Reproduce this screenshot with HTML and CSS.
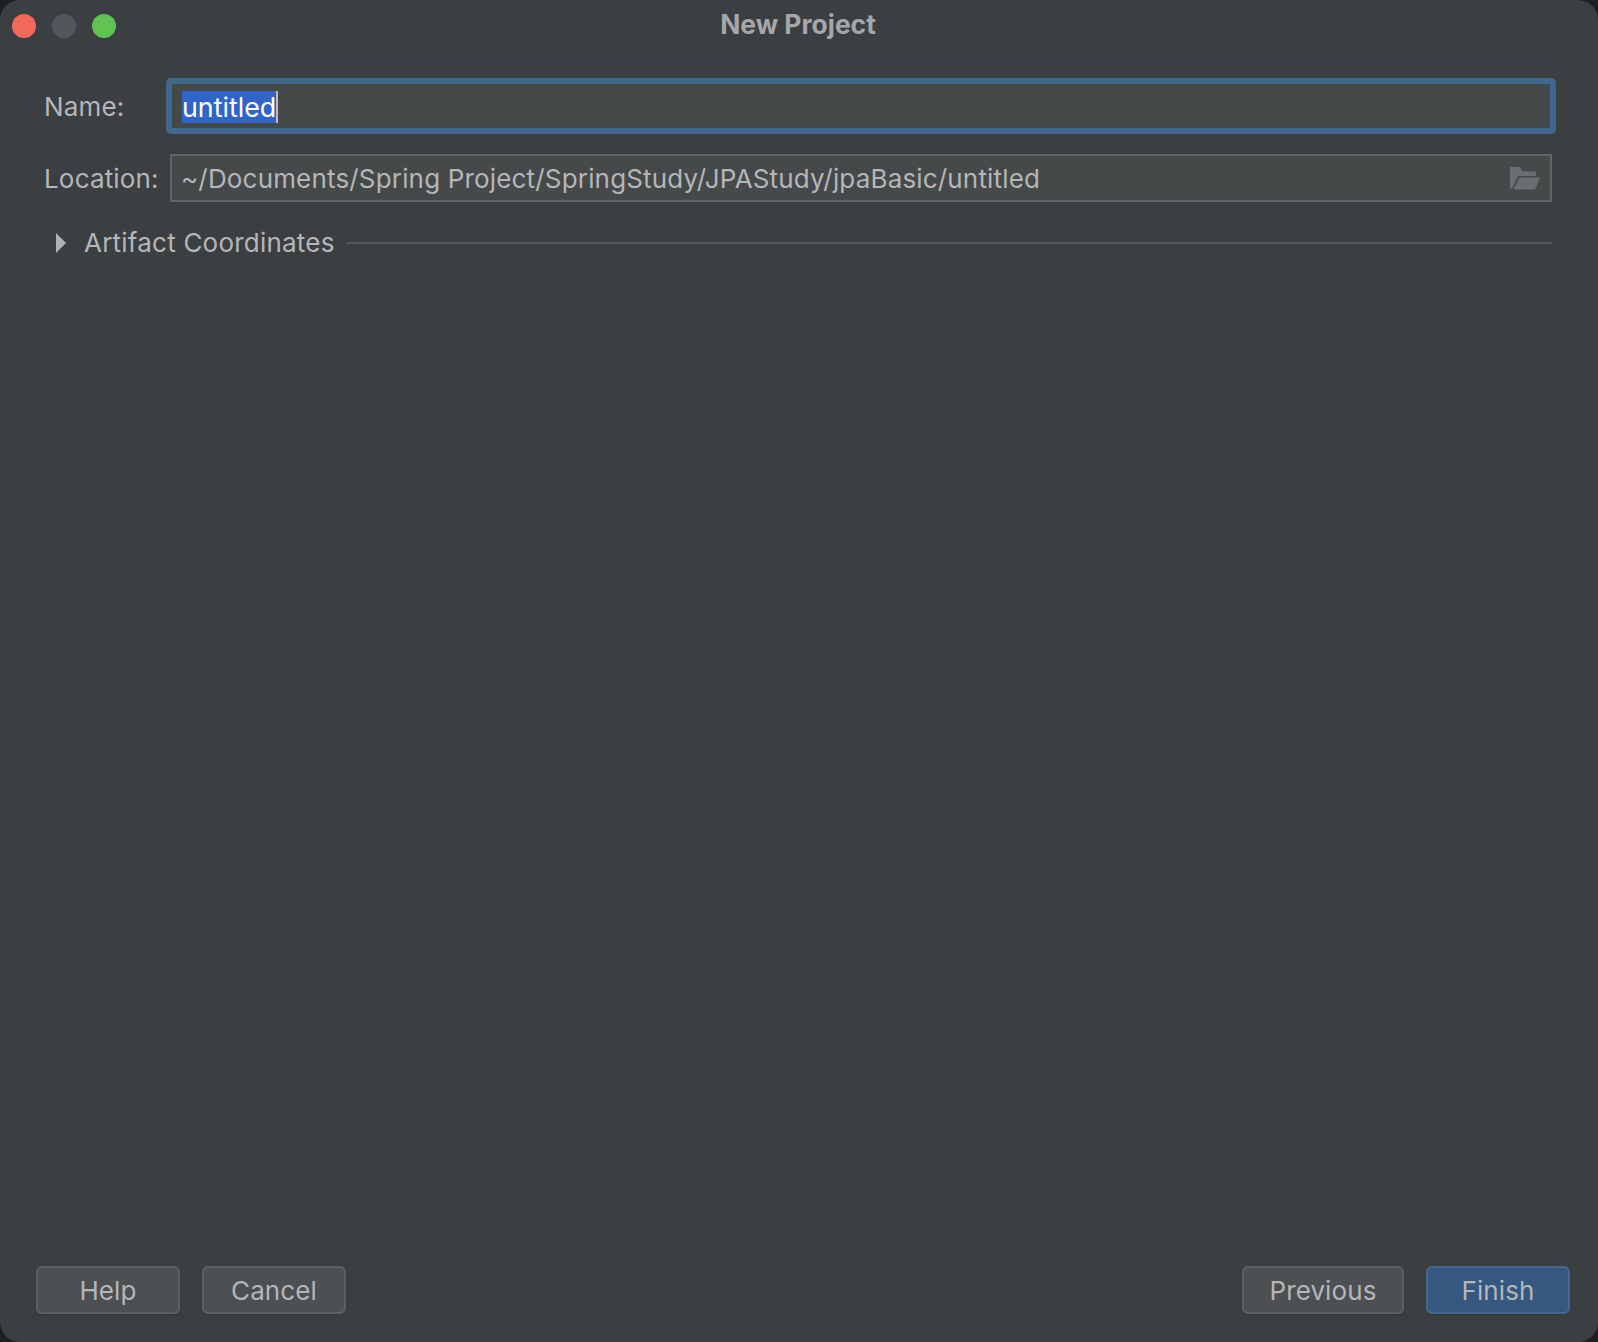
FILE: index.html
```html
<!DOCTYPE html>
<html lang="en">
<head>
<meta charset="utf-8">
<title>New Project</title>
<link rel="stylesheet" href="styles.css">
</head>
<body>
<div class="window">
  <header class="titlebar">
    <div class="lights">
      <span class="light red"></span>
      <span class="light gray"></span>
      <span class="light green"></span>
    </div>
    <div class="title">New Project</div>
  </header>
  <main class="form">
    <div class="row name-row">
      <label class="label">Name:</label>
      <div class="field focused"><span class="selected">untitled</span><span class="caret"></span></div>
    </div>
    <div class="row location-row">
      <label class="label">Location:</label>
      <div class="field">
        <span class="value">~/Documents/Spring Project/SpringStudy/JPAStudy/jpaBasic/untitled</span>
        <svg class="folder" viewBox="0 0 30 23" width="30" height="23" aria-hidden="true">
          <path fill="#687074" d="M0 0h9.500l3 4.500H26V9H8L2 21.500H0z"/>
          <path fill="#687074" d="M9.500 10.500H30L25 22.500H3.500z"/>
        </svg>
      </div>
    </div>
    <div class="section">
      <svg class="arrow" viewBox="0 0 10 20" width="10" height="20" aria-hidden="true"><path fill="#afb1b3" d="M0 0l10 10L0 20z"/></svg>
      <span class="section-title">Artifact Coordinates</span>
      <span class="section-line"></span>
    </div>
  </main>
  <footer class="buttons">
    <div class="group">
      <button class="btn">Help</button>
      <button class="btn">Cancel</button>
    </div>
    <div class="group">
      <button class="btn wide">Previous</button>
      <button class="btn primary">Finish</button>
    </div>
  </footer>
</div>
</body>
</html>
```
FILE: styles.css
```css
* { box-sizing: border-box; }
html, body { margin: 0; height: 100%; background: #1e1f20; }
body { font-family: Inter, "Liberation Sans", sans-serif; color: #b4b6b8; }
.window {
  width: 1598px;
  height: 1342px;
  background: #3c3f41;
  border-radius: 20px;
  display: flex;
  flex-direction: column;
  overflow: hidden;
}
.titlebar { height: 48px; padding-right: 2px; position: relative; display: flex; align-items: center; justify-content: center; flex: none; }
.lights { position: absolute; left: 12px; top: 14px; display: flex; gap: 16px; }
.light { width: 24px; height: 24px; border-radius: 50%; }
.red { background: #f2695c; }
.gray { background: #545759; }
.green { background: #5fc454; }
.title { font-size: 26.400px; font-weight: 700; color: #a5a7a9; }
.form { flex: 1; padding: 30px 46px 0 44px; display: flex; flex-direction: column; }
.row { display: flex; align-items: center; }
.label { font-size: 26px; letter-spacing: .17px; width: 126px; flex: none; }
.field {
  flex: 1;
  height: 48px;
  background: #45494a;
  border: 2px solid #646464;
  padding: 0 10px 0 9px;
  display: flex;
  align-items: center;
  font-size: 26px;
  letter-spacing: .17px;
}
.name-row { height: 56px; }
.name-row .field { height: 56px; margin: 0 -4px; border: 6px solid #40688f; border-radius: 5px; padding: 2px 0 0 10px; font-size: 26.800px; letter-spacing: 0; }
.location-row { margin-top: 20px; }
.selected { background: #2f65ca; color: #fff; height: 32px; line-height: 32px; }
.caret { width: 2px; height: 32px; background: #bbb; }
.value { flex: 1; }
.folder { flex: none; }
.section { display: flex; align-items: center; margin-top: 20px; height: 42px; }
.arrow { margin-left: 12px; flex: none; }
.section-title { margin-left: 18px; font-size: 26px; letter-spacing: .22px; position: relative; top: -1px; }
.section-line { flex: 1; height: 2px; background: #545556; margin-left: 11px; }
.buttons { flex: none; height: 76px; padding: 0 28px 0 36px; display: flex; justify-content: space-between; align-items: flex-start; }
.group { display: flex; gap: 22px; }
.btn {
  width: 144px;
  height: 48px;
  border: 2px solid #5e6060;
  border-radius: 6px;
  background: #4c5052;
  color: #b4b6b8;
  font: 26px Inter, "Liberation Sans", sans-serif;
  letter-spacing: .1px;
  box-shadow: 0 1px 2px rgba(0,0,0,.15);
  padding: 0;
}
.wide { width: 162px; }
.primary { background: #365880; border-color: #43688f; }
```
